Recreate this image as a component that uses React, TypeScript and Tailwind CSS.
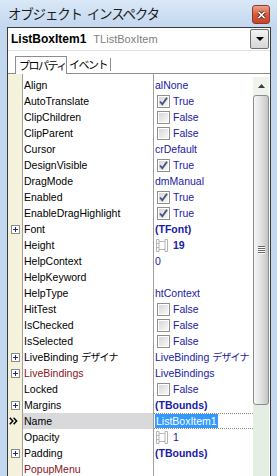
import React from "react";

type Row = {
  name: string;
  jp?: string;
  value?: string;
  valueJp?: string;
  check?: boolean;
  bold?: boolean;
  expand?: boolean;
  spin?: boolean;
  red?: boolean;
  selected?: boolean;
};

const rows: Row[] = [
  { name: "Align", value: "alNone" },
  { name: "AutoTranslate", check: true },
  { name: "ClipChildren", check: false },
  { name: "ClipParent", check: false },
  { name: "Cursor", value: "crDefault" },
  { name: "DesignVisible", check: true },
  { name: "DragMode", value: "dmManual" },
  { name: "Enabled", check: true },
  { name: "EnableDragHighlight", check: true },
  { name: "Font", value: "(TFont)", bold: true, expand: true },
  { name: "Height", value: "19", bold: true, spin: true },
  { name: "HelpContext", value: "0" },
  { name: "HelpKeyword", value: "" },
  { name: "HelpType", value: "htContext" },
  { name: "HitTest", check: false },
  { name: "IsChecked", check: false },
  { name: "IsSelected", check: false },
  { name: "LiveBinding ", jp: "デザイナ", value: "LiveBinding ", valueJp: "デザイナ", expand: true },
  { name: "LiveBindings", value: "LiveBindings", expand: true, red: true },
  { name: "Locked", check: false },
  { name: "Margins", value: "(TBounds)", bold: true, expand: true },
  { name: "Name", value: "ListBoxItem1", selected: true },
  { name: "Opacity", value: "1", spin: true },
  { name: "Padding", value: "(TBounds)", bold: true, expand: true },
  { name: "PopupMenu", value: "", red: true },
];

function CheckBox({ checked }: { checked: boolean }) {
  return (
    <span className="w-[13px] h-[13px] border border-[#8e8f8f] bg-white p-px flex-shrink-0">
      <span className="block w-full h-full bg-gradient-to-br from-[#d8d8d8] to-[#f7f7f7] relative">
        {checked && (
          <svg className="absolute -left-px -top-px" width="11" height="11" viewBox="0 0 11 11">
            <path d="M2 5.5 L4.3 8.3 L9 1.8" fill="none" stroke="#43557f" strokeWidth="1.9" />
          </svg>
        )}
      </span>
    </span>
  );
}

function PlusBox() {
  return (
    <span className="ml-[3px] w-[9px] h-[9px] border border-[#8a8a8a] bg-white flex items-center justify-center">
      <svg width="7" height="7" viewBox="0 0 7 7">
        <path d="M1 3.5H6M3.5 1V6" stroke="#1c2a6a" strokeWidth="1" />
      </svg>
    </span>
  );
}

function Chevrons() {
  return (
    <svg className="ml-px" width="9" height="8" viewBox="0 0 9 8">
      <path d="M0.8 0.8 L3.8 4 L0.8 7.2 M4.6 0.8 L7.6 4 L4.6 7.2" fill="none" stroke="#000" strokeWidth="1.5" />
    </svg>
  );
}

function SpinIcon() {
  return (
    <svg className="ml-[2px] flex-shrink-0" width="12" height="13" viewBox="0 0 12 13" fill="none" stroke="#b4b4b4">
      <path d="M0.5 0.5V12.5M3 0.5V12.5M9 0.5V12.5M11.5 0.5V12.5" />
      <path d="M0.5 0.5H3M9 0.5H11.5M0.5 12.5H3M9 12.5H11.5M3 2.5H9M3 10.5H9M0.5 4.5H3M0.5 8.5H3" />
    </svg>
  );
}

function GridRow({ row }: { row: Row }) {
  return (
    <div className="flex h-[16px] leading-[16px]">
      <div className="w-[15px] bg-[#f5f2dc] border-r border-[#a0a0a0] flex items-center">
        {row.expand && <PlusBox />}
        {row.selected && <Chevrons />}
      </div>
      <div
        className={`w-[131px] border-r border-[#a0a0a0] pl-px whitespace-nowrap overflow-hidden ${
          row.selected ? "bg-[#d9d9dc]" : "bg-white"
        } ${row.red ? "text-[#8a1424]" : "text-black"}`}
      >
        {row.name}
        {row.jp && <span className="text-[10px] tracking-[-0.8px]">{row.jp}</span>}
      </div>
      <div
        className={`flex-1 flex items-center whitespace-nowrap overflow-hidden text-[#1a20a4] ${
          row.selected ? "border-y border-dotted border-[#8a8a8a]" : ""
        } ${row.bold ? "font-bold" : ""}`}
      >
        {row.check !== undefined ? (
          <span className="flex items-center ml-[3px] gap-[3px]">
            <CheckBox checked={row.check} />
            {row.check ? "True" : "False"}
          </span>
        ) : row.spin ? (
          <span className="flex items-center gap-[5px]">
            <SpinIcon />
            {row.value}
          </span>
        ) : row.selected ? (
          <span className="ml-px px-px bg-[#3399ff] text-white leading-[14px]">{row.value}</span>
        ) : (
          <span className="pl-px">
            {row.value}
            {row.valueJp && <span className="text-[10px] tracking-[-0.8px]">{row.valueJp}</span>}
          </span>
        )}
      </div>
    </div>
  );
}

function ScrollBar() {
  return (
    <div className="w-[17px] flex flex-col bg-white">
      <div className="h-[3px]" />
      <div className="w-[16px] flex-1 flex flex-col bg-[#e5eee3]">
        <div className="h-[18px] flex items-center justify-center bg-[#eef3ec]">
          <svg width="7" height="4" viewBox="0 0 7 4">
            <path d="M0 4 L3.5 0 L7 4Z" fill="#3c3c3c" />
          </svg>
        </div>
        <div className="h-[310px] rounded-[3px] border border-[#8c8c8c] bg-gradient-to-r from-[#f6f6f6] via-[#e2e2e2] to-[#c4c4c4] flex items-center justify-center">
          <svg width="7" height="8" viewBox="0 0 7 8">
            <path d="M0 0.5H7M0 2.5H7M0 4.5H7M0 6.5H7" stroke="#6a6a6a" strokeWidth="1" />
            <path d="M0 1.5H7M0 3.5H7M0 5.5H7M0 7.5H7" stroke="#fafafa" strokeWidth="1" />
          </svg>
        </div>
      </div>
    </div>
  );
}

export default function App() {
  return (
    <div className="w-[277px] h-[476px] overflow-hidden flex flex-col bg-[#c3d7ef] font-['Liberation_Sans','Noto_Sans_CJK_JP',sans-serif] text-[10.5px]">
      {/* title bar */}
      <div className="h-[27px] flex justify-between pl-[8px] pr-[7px] bg-gradient-to-b from-[#dae8f7] to-[#c3d7ef]">
        <span className="self-center flex gap-[5px] font-['Noto_Sans_CJK_JP',sans-serif] text-[13.5px] tracking-[-1.2px] text-[#1b1b1b]">
          <span>オブジェクト</span>
          <span>インスペクタ</span>
        </span>
        <div className="mt-[5px] w-[18px] h-[19px] rounded-[3px] border border-[#8e3a28] bg-gradient-to-b from-[#eaa38e] via-[#d65a3c] to-[#c4462c] flex items-center justify-center">
          <svg width="9" height="8" viewBox="0 0 9 8">
            <path d="M1.5 1 L7.5 7 M7.5 1 L1.5 7" stroke="#4a2a22" strokeWidth="3.2" />
            <path d="M1.5 1 L7.5 7 M7.5 1 L1.5 7" stroke="#fff" strokeWidth="1.7" />
          </svg>
        </div>
      </div>

      {/* client */}
      <div className="flex-1 pl-[7px] pr-[6px] flex flex-col min-h-0">
        <div className="flex-1 flex flex-col min-h-0 border border-b-0 border-[#3a3a3a] bg-white">
          {/* object combo */}
          <div className="h-[23px] flex-shrink-0 flex items-center justify-between pl-[3px] border-b border-[#dde6df]">
            <div className="flex items-center gap-[7px] whitespace-nowrap">
              <span className="text-[12px] font-bold text-black">ListBoxItem1</span>
              <span className="text-[11px] text-[#808080]">TListBoxItem</span>
            </div>
            <div className="self-start mt-px mr-px w-[19px] h-[20px] rounded-[2px] border border-[#707070] bg-gradient-to-b from-[#f4f4f4] to-[#d6d6d6] flex items-center justify-center">
              <svg width="8" height="4" viewBox="0 0 8 4">
                <path d="M0 0H8L4 4Z" fill="#000" />
              </svg>
            </div>
          </div>

          {/* tabs */}
          <div className="h-[23px] flex-shrink-0 flex items-end pl-[7px] border-b border-[#8d8d8d] font-['Noto_Sans_CJK_JP',sans-serif] text-[11px] tracking-[-1.5px] text-black">
            <div className="h-[18px] w-[52px] -mb-px border border-b-0 border-[#8d8d8d] bg-white flex items-center pl-[3px]">
              プロパティ
            </div>
            <div className="h-[17px] flex items-center pl-[2px] pr-[3px]">イベント</div>
            <div className="w-px h-[13px] mb-[2px] bg-[#8d8d8d]" />
          </div>

          {/* property grid */}
          <div className="flex flex-1 min-h-0">
            <div className="flex flex-col w-[245px]">
              <div className="flex h-[3px] flex-shrink-0">
                <div className="w-[15px] bg-[#f5f2dc] border-r border-[#a0a0a0]" />
                <div className="w-[131px] border-r border-[#a0a0a0]" />
                <div className="flex-1" />
              </div>
              {rows.map((r) => (
                <GridRow key={r.name + (r.jp ?? "")} row={r} />
              ))}
            </div>
            <ScrollBar />
          </div>
        </div>
      </div>
    </div>
  );
}
